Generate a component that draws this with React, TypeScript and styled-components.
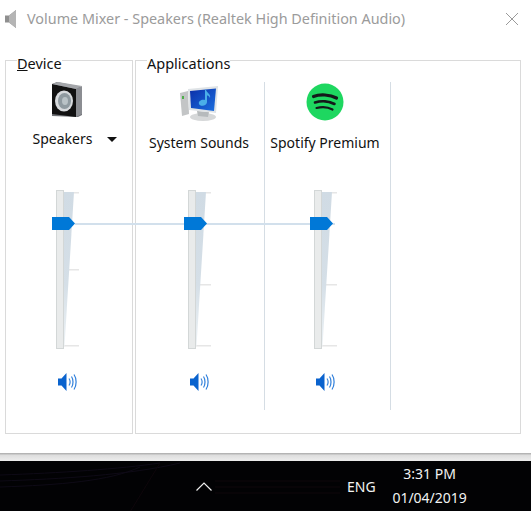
import React from "react";
import styled, { createGlobalStyle } from "styled-components";

const GlobalStyle = createGlobalStyle`
  html, body {
    margin: 0;
    padding: 0;
    background: #fff;
  }
  body {
    font-family: "Noto Sans", "Open Sans", sans-serif;
  }
`;

const Screen = styled.div`
  width: 531px;
  height: 511px;
  overflow: hidden;
  display: flex;
  flex-direction: column;
`;

const TitleBar = styled.div`
  height: 38px;
  flex: none;
  display: flex;
  align-items: center;
  padding: 0 13px 0 5px;
  box-sizing: border-box;
  color: #9b9b9b;
  font-size: 14.4px;
`;

const TitleText = styled.span`
  margin-left: 10px;
  margin-bottom: 2px;
  flex: 1;
  white-space: nowrap;
`;

const Groups = styled.div`
  position: relative;
  height: 382px;
  margin: 14px 10px 0 5px;
  display: flex;
  gap: 2px;
`;

const Group = styled.fieldset<{ $width: number }>`
  width: ${(p) => p.$width}px;
  box-sizing: border-box;
  margin: 0;
  padding: 14px 0 0 0;
  min-width: 0;
  border: 1px solid #dadada;
  display: flex;
`;

const Legend = styled.legend`
  margin-left: 11px;
  padding: 0;
  height: 16px;
  line-height: 22px;
  font-size: 14.5px;
  color: #111;
`;

const LinkLine = styled.div`
  position: absolute;
  left: 70px;
  top: 171px;
  width: 260px;
  height: 2px;
  background: #d2e0ec;
`;

const Mixer = styled.div<{ $width: number; $divider?: boolean; $inset?: number }>`
  width: ${(p) => p.$width}px;
  height: 328px;
  box-sizing: border-box;
  flex: none;
  padding-right: ${(p) => p.$inset ?? 0}px;
  border-right: ${(p) => (p.$divider ? "1px solid #d5dde4" : "none")};
  display: flex;
  flex-direction: column;
  align-items: center;
`;

const IconSlot = styled.div<{ $align: string }>`
  height: 40px;
  flex: none;
  display: flex;
  align-items: ${(p) => p.$align};
`;

const NameSlot = styled.div`
  height: 66px;
  flex: none;
`;

const Name = styled.div<{ $top: number; $indent?: number }>`
  margin-top: ${(p) => p.$top}px;
  padding-left: ${(p) => p.$indent ?? 0}px;
  display: flex;
  align-items: center;
  line-height: 20px;
  font-size: 14px;
  color: #111;
  white-space: nowrap;
`;

const DropArrow = styled.span`
  width: 0;
  height: 0;
  margin-left: 15px;
  border-left: 5px solid transparent;
  border-right: 5px solid transparent;
  border-top: 5px solid #111;
`;

const SliderSvg = styled.svg`
  position: relative;
  display: block;
  flex: none;
`;

const MuteButton = styled.div`
  margin-top: 22px;
  height: 20px;
`;

const Shadow = styled.div`
  height: 8px;
  margin-top: 19px;
  flex: none;
  background: linear-gradient(#a9a9a9, #dedede 30%, #ededed);
`;

const Taskbar = styled.div`
  position: relative;
  flex: 1;
  display: flex;
  align-items: center;
  background: #020204;
  color: #f2f2f2;
  font-size: 14px;
`;

const Wallpaper = styled.svg`
  position: absolute;
  inset: 0;
`;

const Chevron = styled.svg`
  position: relative;
  margin-left: 196px;
`;

const Lang = styled.span`
  position: relative;
  margin-left: 135px;
`;

const Clock = styled.div`
  position: relative;
  width: 80px;
  margin-left: 14px;
  display: flex;
  flex-direction: column;
  gap: 4px;
  text-align: center;
  line-height: 20px;
`;

const SpeakerBoxIcon = () => (
  <svg width="32" height="36" viewBox="0 0 32 36">
    <path d="M1 2 L6 0 L31 5 L31 33 L27 35 L1 34 Z" fill="#6f7176" />
    <path d="M1 2 L25 7 L25 35 L1 32 Z" fill="#111" />
    <path d="M25 7 L31 4 L31 32 L25 35 Z" fill="#8b8d92" />
    <path d="M1 2 L7 0 L31 4 L25 7 Z" fill="#a4a6aa" />
    <ellipse cx="13" cy="19" rx="9" ry="10.500" fill="#d7dadd" />
    <ellipse cx="13.500" cy="19" rx="6.500" ry="8" fill="#8f9aa0" />
    <ellipse cx="14" cy="19" rx="3" ry="4" fill="#b9c2c6" />
  </svg>
);

const SystemSoundsIcon = () => (
  <svg width="40" height="36" viewBox="0 0 40 36">
    <defs>
      <linearGradient id="screen" x1="0" y1="0" x2="1" y2="1">
        <stop offset="0" stopColor="#0b2fa8" />
        <stop offset="1" stopColor="#1b6fe0" />
      </linearGradient>
    </defs>
    <path d="M1 7 L9 5 L10 28 L3 30 Z" fill="#c3c5c6" />
    <rect x="3" y="10" width="2" height="3" fill="#4fae4a" />
    <ellipse cx="24" cy="31" rx="13" ry="4" fill="#d6d8d9" />
    <path d="M18 25 L30 26 L29 31 L19 30 Z" fill="#b6babc" />
    <path d="M9 3 L39 0 L37 27 L10 24 Z" fill="#dfe3e6" />
    <path d="M11 5 L37 2.5 L35 25 L12 22 Z" fill="url(#screen)" />
    <path d="M26 3 L27 4 C28 7 32 8 31 12 C30 10 29 9.500 28 9.500 L28 16 C28 20 21 21 20 18 C19 15 23 13 26 14 Z" fill="#4aaee8" />
  </svg>
);

const SpotifyIcon = () => (
  <svg width="38" height="38" viewBox="0 0 38 38">
    <circle cx="19" cy="19" r="18.500" fill="#1ed760" />
    <g fill="none" stroke="#14181a" strokeLinecap="round">
      <path d="M7.500 13.500 C14 11 24 11.500 30.500 15" strokeWidth="3.200" />
      <path d="M9 19.500 C15 17.500 23 18 28.500 21" strokeWidth="2.600" />
      <path d="M10.500 25 C16 23.500 22 24 26.500 26.500" strokeWidth="2.200" />
    </g>
  </svg>
);

const VolumeIcon = () => (
  <svg width="20" height="20" viewBox="0 0 20 20" fill="none">
    <path d="M1 6.500 H4.500 L9.500 1 V19 L4.500 13.500 H1 Z" fill="#0a63ce" />
    <path d="M12 6.500 C13.300 8.500 13.300 11.500 12 13.500" stroke="#3b86dc" strokeWidth="1.200" />
    <path d="M14.500 4.500 C16.500 7.500 16.500 12.500 14.500 15.500" stroke="#2f7fdb" strokeWidth="1.200" />
    <path d="M17 2.500 C19.800 6.500 19.800 13.500 17 17.500" stroke="#2f7fdb" strokeWidth="1.200" />
  </svg>
);

const Slider: React.FC<{ midTick: number }> = ({ midTick }) => (
  <SliderSvg width="30" height="162" viewBox="0 0 30 162">
    <defs>
      <linearGradient id="wedge" x1="0" y1="0" x2="0" y2="1">
        <stop offset="0" stopColor="#d0dbe4" />
        <stop offset="0.6" stopColor="#d5dfe7" />
        <stop offset="1" stopColor="#edf2f5" />
      </linearGradient>
    </defs>
    <rect x="4.500" y="2.500" width="7" height="158" fill="#e9ebeb" stroke="#d3d7d7" />
    <rect x="22" y="4" width="5" height="1.500" fill="#e6e6e6" />
    <rect x="12" y={midTick} width="15" height="1.500" fill="#e6e6e6" />
    <rect x="12" y="157" width="15" height="1.500" fill="#e6e6e6" />
    <path d="M12 4 H22 L12.500 158 H12 Z" fill="url(#wedge)" />
    <path d="M0 29 H17 L23 35.500 L17 42 H0 Z" fill="#0078d7" />
  </SliderSvg>
);

export default function App() {
  return (
    <Screen>
      <GlobalStyle />
      <TitleBar>
        <svg width="12" height="18" viewBox="0 0 12 18">
          <path d="M0 5.500 H4 L11 0 V18 L4 12.500 H0 Z" fill="#8f8f8f" />
          <path d="M4 5.500 L11 0 V18 L4 12.500 Z" fill="#b5b5b5" />
        </svg>
        <TitleText>Volume Mixer - Speakers (Realtek High Definition Audio)</TitleText>
        <svg width="12" height="12" viewBox="0 0 12 12">
          <path d="M0 0 L12 12 M12 0 L0 12" stroke="#9a9a9a" strokeWidth="1" />
        </svg>
      </TitleBar>
      <Groups>
        <LinkLine />
        <Group $width={128}>
          <Legend>
            <u>D</u>evice
          </Legend>
          <Mixer $width={126} $inset={4}>
            <IconSlot $align="flex-start">
              <SpeakerBoxIcon />
            </IconSlot>
            <NameSlot>
              <Name $top={7} $indent={16}>
                Speakers
                <DropArrow />
              </Name>
            </NameSlot>
            <Slider midTick={81} />
            <MuteButton>
              <VolumeIcon />
            </MuteButton>
          </Mixer>
        </Group>
        <Group $width={386}>
          <Legend>Applications</Legend>
          <Mixer $width={129} $divider $inset={2}>
            <IconSlot $align="flex-end">
              <SystemSoundsIcon />
            </IconSlot>
            <NameSlot>
              <Name $top={11}>System Sounds</Name>
            </NameSlot>
            <Slider midTick={96} />
            <MuteButton>
              <VolumeIcon />
            </MuteButton>
          </Mixer>
          <Mixer $width={126} $divider $inset={5}>
            <IconSlot $align="center">
              <SpotifyIcon />
            </IconSlot>
            <NameSlot>
              <Name $top={11}>Spotify Premium</Name>
            </NameSlot>
            <Slider midTick={96} />
            <MuteButton>
              <VolumeIcon />
            </MuteButton>
          </Mixer>
        </Group>
      </Groups>
      <Shadow />
      <Taskbar>
        <Wallpaper width="531" height="51" viewBox="0 0 531 51">
          <g fill="none" stroke="#0e0a16" strokeWidth="1">
            <path d="M0 14 C60 12 120 8 160 2" />
            <path d="M0 20 C60 18 130 14 180 2" />
            <path d="M0 26 C60 24 110 20 140 6" />
          </g>
          <g fill="none" stroke="#0e060b" strokeWidth="1">
            <path d="M215 20 H340" />
            <path d="M215 26 H340" />
            <path d="M215 32 H340" />
            <path d="M130 51 L160 2" />
          </g>
        </Wallpaper>
        <Chevron width="16" height="9" viewBox="0 0 16 9">
          <path d="M0.500 8.500 L8 1 L15.500 8.500" fill="none" stroke="#eee" strokeWidth="1.200" />
        </Chevron>
        <Lang>ENG</Lang>
        <Clock>
          <span>3:31 PM</span>
          <span>01/04/2019</span>
        </Clock>
      </Taskbar>
    </Screen>
  );
}
